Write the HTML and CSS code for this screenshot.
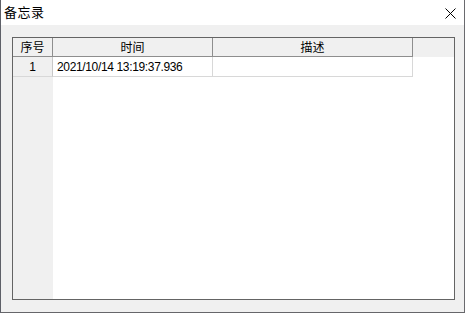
FILE: index.html
```html
<!DOCTYPE html>
<html>
  <head>
    <meta charset="UTF-8" />
    <meta name="viewport" content="width=device-width, initial-scale=1.0" />
    <link rel="stylesheet" href="styles.css">
    <title>备忘录</title>
  </head>

  <body>
    <div class="window">
      <div class="titlebar">
        <span class="title">备忘录</span>
        <svg class="close" width="11" height="11" viewBox="0 0 11 11">
          <path d="M0.5 0.5 L10.5 10.5 M10.5 0.5 L0.5 10.5" stroke="#000" stroke-width="1" fill="none" />
        </svg>
      </div>
      <div class="client">
        <div class="grid-table">
          <div class="head corner">序号</div>
          <div class="head">时间</div>
          <div class="head">描述</div>
          <div class="head blank"></div>

          <div class="rowhead">1</div>
          <div class="cell time">2021/10/14 13:19:37.936</div>
          <div class="cell"></div>
          <div class="empty"></div>

          <div class="rowhead-fill"></div>
          <div class="empty wide"></div>
        </div>
      </div>
    </div>
  </body>
</html>
```

FILE: styles.css
```css
body {
  margin: 0px;
  background-color: #ffffff;
  font-family: "Liberation Sans", "Noto Sans CJK SC", sans-serif;
}

.window {
  width: 463px;
  height: 312px;
  border-left: 1px solid #5e6068;
  border-right: 1px solid #6a6a6e;
  border-bottom: 1px solid #66666a;
  background-color: #f0f0f0;
  display: flex;
  flex-direction: column;
}

.titlebar {
  height: 25px;
  background-color: #ffffff;
  display: flex;
  align-items: center;
  justify-content: space-between;
  padding: 0px 8px 0px 3px;
}

.title {
  font-family: "Noto Sans CJK SC", sans-serif;
  font-size: 13px;
  letter-spacing: 0.5px;
  color: #000000;
  margin-top: -2px;
}

.close {
  display: block;
  margin-top: 1px;
}

.client {
  flex: 1;
  display: flex;
  padding: 12px 9px 12px 11px;
}

.grid-table {
  flex: 1;
  border: 1px solid #646464;
  background-color: #ffffff;
  display: grid;
  grid-template-columns: 40px 160px 200px 1fr;
  grid-template-rows: 19px 20px 1fr;
  font-size: 12px;
  color: #000000;
}

.head {
  background-color: #f0f0f0;
  border-right: 1px solid #8e8e8e;
  border-bottom: 1px solid #8e8e8e;
  font-family: "Noto Sans CJK SC", sans-serif;
  display: flex;
  align-items: center;
  justify-content: center;
  line-height: 1;
}

.head.blank {
  border: none;
}

.rowhead {
  background-color: #f0f0f0;
  border-right: 1px solid #c8c8c8;
  border-bottom: 1px solid #d8d8d8;
  display: flex;
  align-items: center;
  justify-content: center;
}

.cell {
  border-right: 1px solid #d8d8d8;
  border-bottom: 1px solid #d8d8d8;
  display: flex;
  align-items: center;
}

.time {
  padding-left: 4px;
  letter-spacing: -0.35px;
}

.rowhead-fill {
  background-color: #f0f0f0;
}

.empty.wide {
  grid-column: span 3;
}
```
